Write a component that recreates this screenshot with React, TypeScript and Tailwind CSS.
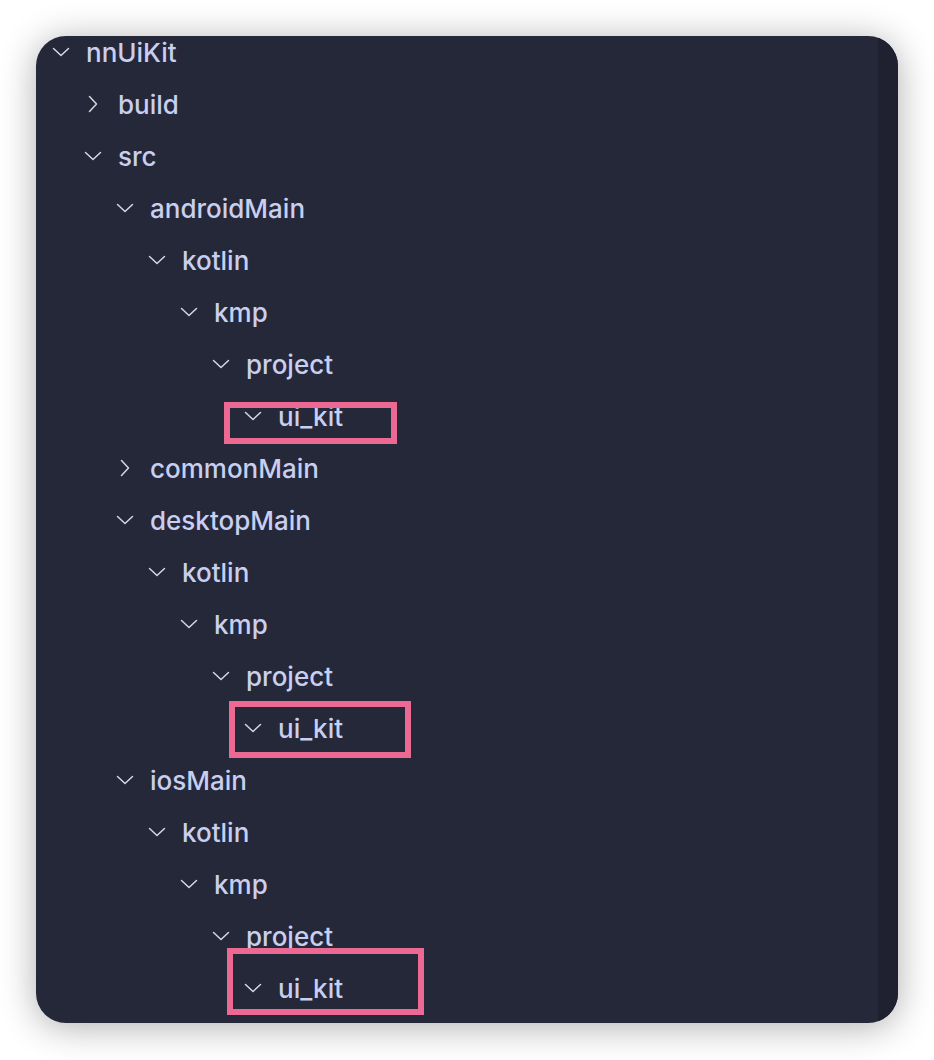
type Row = { name: string; level: number; open: boolean };

const rows: Row[] = [
  { name: "nnUiKit", level: 0, open: true },
  { name: "build", level: 1, open: false },
  { name: "src", level: 1, open: true },
  { name: "androidMain", level: 2, open: true },
  { name: "kotlin", level: 3, open: true },
  { name: "kmp", level: 4, open: true },
  { name: "project", level: 5, open: true },
  { name: "ui_kit", level: 6, open: true },
  { name: "commonMain", level: 2, open: false },
  { name: "desktopMain", level: 2, open: true },
  { name: "kotlin", level: 3, open: true },
  { name: "kmp", level: 4, open: true },
  { name: "project", level: 5, open: true },
  { name: "ui_kit", level: 6, open: true },
  { name: "iosMain", level: 2, open: true },
  { name: "kotlin", level: 3, open: true },
  { name: "kmp", level: 4, open: true },
  { name: "project", level: 5, open: true },
  { name: "ui_kit", level: 6, open: true },
];

function Chevron({ open }: { open: boolean }) {
  return (
    <span className="w-[18px] h-[18px] flex items-center justify-center shrink-0">
      {open ? (
        <svg width="18" height="10" viewBox="0 0 18 10" fill="none">
          <path d="M1.5 1.5 L9 8.5 L16.5 1.5" stroke="#d6d8e0" strokeWidth="1.5" strokeLinecap="round" strokeLinejoin="round" />
        </svg>
      ) : (
        <svg width="10" height="18" viewBox="0 0 10 18" fill="none">
          <path d="M1.5 1.5 L8.5 9 L1.5 16.5" stroke="#d6d8e0" strokeWidth="1.5" strokeLinecap="round" strokeLinejoin="round" />
        </svg>
      )}
    </span>
  );
}

const levelPad = [
  "pl-[16px]",
  "pl-[48px]",
  "pl-[80px]",
  "pl-[112px]",
  "pl-[144px]",
  "pl-[176px]",
  "pl-[208px]",
];

export default function App() {
  return (
    <div
      className="relative w-[934px] h-[1060px] bg-white pt-[36px] pl-[36px] flex items-start"
      style={{ fontFamily: "Inter, 'Noto Sans', sans-serif" }}
    >
      <div className="w-[862px] h-[987px] rounded-[30px] overflow-hidden bg-[#252839] shadow-[0_4px_36px_rgba(0,0,0,0.32)] flex">
        <div className="flex-1 -mt-[10px]">
          {rows.map((r, i) => (
            <div key={i} className={`h-[52px] flex items-center gap-[16px] ${levelPad[r.level]}`}>
              <Chevron open={r.open} />
              <span className="text-[26px] font-medium text-[#c8cff0] leading-none pt-[2px]">{r.name}</span>
            </div>
          ))}
        </div>
        <div className="w-[20px] bg-[#1f2131]" />
      </div>

      {/* highlight annotations */}
      <div className="absolute left-[224px] top-[402px] w-[173px] h-[42px] border-[6px] border-[#ec6994]" />
      <div className="absolute left-[229px] top-[701px] w-[182px] h-[57px] border-[6px] border-[#ec6994]" />
      <div className="absolute left-[227px] top-[948px] w-[197px] h-[67px] border-[6px] border-[#ec6994]" />
    </div>
  );
}
